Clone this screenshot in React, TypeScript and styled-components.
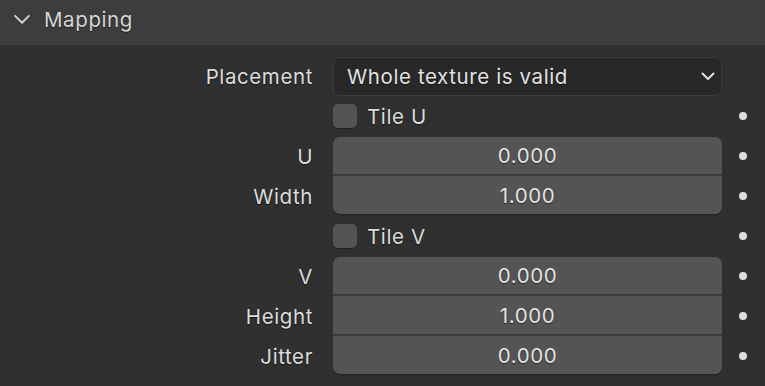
import React from "react";
import styled, { createGlobalStyle, css } from "styled-components";

const Global = createGlobalStyle`
  html, body { margin: 0; padding: 0; background: #303030; }
  body { font-family: Inter, "Noto Sans", "DejaVu Sans", sans-serif; overflow: hidden; }
  * { box-sizing: border-box; }
`;

const textStyle = css`
  font-size: 20.5px;
  letter-spacing: 0.6px;
  text-shadow: 0 1px 1px rgba(0, 0, 0, 0.55);
`;

const Panel = styled.div`
  width: 765px;
  height: 386px;
  background: #303030;
  display: flex;
  flex-direction: column;
`;

const Header = styled.div`
  height: 45px;
  background: #3d3d3d;
  display: flex;
  align-items: center;
  padding-left: 12px;
  gap: 12px;
  color: #d6d6d6;
  padding-bottom: 7px;
  ${textStyle}
`;

const Body = styled.div`
  display: grid;
  grid-template-columns: 313px 409px 42px;
  grid-auto-rows: 40px;
  padding-top: 11px;
`;

const Label = styled.div`
  display: flex;
  align-items: center;
  justify-content: flex-end;
  color: #dcdcdc;
  ${textStyle}
`;

const Cell = styled.div`
  display: flex;
  align-items: center;
  padding-left: 20px;
`;

const DotCell = styled.div`
  display: flex;
  align-items: center;
  justify-content: center;
`;

const Dot = styled.div`
  width: 8px;
  height: 8px;
  border-radius: 50%;
  background: #dedede;
`;

const Dropdown = styled.div`
  width: 100%;
  height: 39px;
  background: #282828;
  border: 1px solid #3c3c3c;
  border-radius: 7px;
  display: flex;
  align-items: center;
  justify-content: space-between;
  padding: 0 5px 0 13px;
  color: #e2e2e2;
  ${textStyle}
`;

type Pos = "top" | "middle" | "bottom" | "single";

const Field = styled.div<{ $pos: Pos }>`
  width: 100%;
  background: #545454;
  display: flex;
  align-items: center;
  justify-content: center;
  color: #e4e4e4;
  align-self: flex-start;
  ${textStyle}
  ${(p) =>
    p.$pos === "top"
      ? css`
          height: 39px;
          margin-top: 1px;
          border-radius: 7px 7px 0 0;
          border-bottom: 2px solid #3a3a3a;
        `
      : p.$pos === "middle"
      ? css`
          height: 40px;
          border-bottom: 2px solid #3a3a3a;
        `
      : p.$pos === "bottom"
      ? css`
          height: 38px;
          border-radius: 0 0 7px 7px;
          box-shadow: 0 2px 0 rgba(0, 0, 0, 0.18);
        `
      : css`
          height: 38px;
          margin-top: 1px;
          border-radius: 7px;
        `}
`;

const Check = styled.label`
  display: flex;
  align-items: center;
  gap: 10px;
  color: #dcdcdc;
  ${textStyle}
`;

const Box = styled.span`
  width: 24px;
  height: 24px;
  border-radius: 5px;
  background: #545454;
  box-shadow: 0 1px 1px rgba(0, 0, 0, 0.35);
`;

const Chevron = ({ size, color, width }: { size: number; color: string; width: number }) => (
  <svg width={size} height={size} viewBox="0 0 16 16" fill="none">
    <path d="M2.5 5.5 L8 11 L13.5 5.5" stroke={color} strokeWidth={width} strokeLinecap="round" strokeLinejoin="round" />
  </svg>
);

type Row =
  | { kind: "field"; label: string; value: string; pos: Pos }
  | { kind: "check"; label: string };

const rows: Row[] = [
  { kind: "check", label: "Tile U" },
  { kind: "field", label: "U", value: "0.000", pos: "top" },
  { kind: "field", label: "Width", value: "1.000", pos: "bottom" },
  { kind: "check", label: "Tile V" },
  { kind: "field", label: "V", value: "0.000", pos: "top" },
  { kind: "field", label: "Height", value: "1.000", pos: "middle" },
  { kind: "field", label: "Jitter", value: "0.000", pos: "bottom" },
];

export default function App() {
  return (
    <Panel>
      <Global />
      <Header>
        <Chevron size={20} color="#cfcfcf" width={1.6} />
        <span>Mapping</span>
      </Header>
      <Body>
        <Label>Placement</Label>
        <Cell>
          <Dropdown>
            <span>Whole texture is valid</span>
            <Chevron size={16} color="#e6e6e6" width={1.8} />
          </Dropdown>
        </Cell>
        <DotCell />
        {rows.map((r, i) =>
          r.kind === "check" ? (
            <React.Fragment key={i}>
              <Label />
              <Cell>
                <Check>
                  <Box />
                  {r.label}
                </Check>
              </Cell>
              <DotCell>
                <Dot />
              </DotCell>
            </React.Fragment>
          ) : (
            <React.Fragment key={i}>
              <Label>{r.label}</Label>
              <Cell>
                <Field $pos={r.pos}>{r.value}</Field>
              </Cell>
              <DotCell>
                <Dot />
              </DotCell>
            </React.Fragment>
          )
        )}
      </Body>
    </Panel>
  );
}
